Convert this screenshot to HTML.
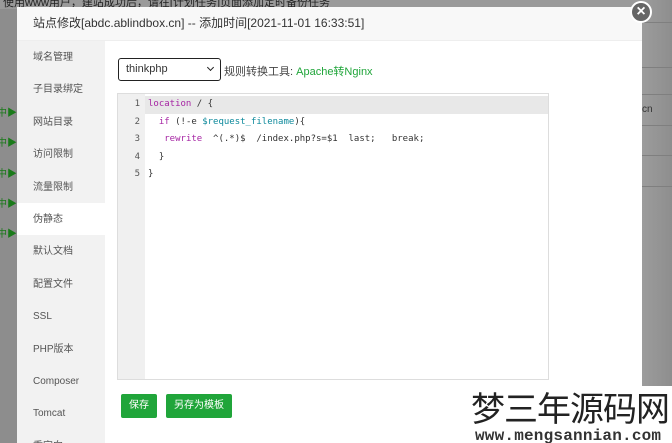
<!DOCTYPE html>
<html><head><meta charset="utf-8"><style>
*{margin:0;padding:0;box-sizing:border-box}
html,body{width:672px;height:443px;overflow:hidden}
body{background:#8f8f8f;font-family:"Liberation Sans","Noto Sans CJK SC",sans-serif;position:relative}
.top{position:absolute;left:0;top:0;width:672px;height:9px;background:#9a9a9a;font-size:11px;color:#222;line-height:6px;overflow:hidden;white-space:nowrap}
.left{position:absolute;left:0;top:9px;width:17px;height:434px;background:#8d8d8d;overflow:hidden}
.left div{position:absolute;left:-3px;font-size:10px;color:#1a7a1a;white-space:nowrap}
.right{position:absolute;left:642px;top:0;width:30px;height:443px;background:linear-gradient(90deg,#9c9c9c,#8e8e8e)}
.right i{position:absolute;left:0;width:30px;height:1px;background:#7f7f7f}
.dlg{position:absolute;left:17px;top:7px;width:625px;height:436px;background:#fff;overflow:hidden}
.hd{position:absolute;left:0;top:0;width:625px;height:34px;background:#f8f8f8;border-bottom:1px solid #eee;font-size:12px;color:#333;line-height:32px;padding-left:16px;z-index:2}
.side{position:absolute;left:0;top:34px;width:88px;height:410px;background:#f2f2f2}
.side div{height:32.4px;line-height:34px;font-size:10px;color:#555;padding-left:16px}
.side .on{background:#fff}
.close{position:absolute;left:630px;top:1px;width:22px;height:22px;border-radius:50%;background:#666;border:2px solid #fff;color:#fff;text-align:center;line-height:17px;font-size:16px;font-weight:bold;z-index:3}
.sel{position:absolute;left:118px;top:58px;width:103px;height:23px;border:1.5px solid #222;border-radius:3px;font-size:11px;line-height:20px;padding-left:7px;color:#333;background:#fff}
.sel:after{content:"";position:absolute;right:7px;top:6px;width:4px;height:4px;border-right:1.5px solid #222;border-bottom:1.5px solid #222;transform:rotate(45deg)}
.tool{position:absolute;left:224px;top:63px;font-size:11px;color:#444}
.tool span{color:#20a53a}
.ed{position:absolute;left:117px;top:93px;width:432px;height:287px;border:1px solid #ddd;background:#fff}
.gut{position:absolute;left:0;top:0;width:27px;height:100%;background:#f0f0f0}
.ln{position:absolute;left:0;width:27px;text-align:right;padding-right:5px;font:9px "DejaVu Sans Mono",monospace;color:#555}
.cl{position:absolute;left:30px;font:9px "DejaVu Sans Mono",monospace;color:#333;white-space:pre}
.act{position:absolute;left:0;top:2px;width:430px;height:18px;background:#e8e8e8}
.k{color:#a626a4}.v{color:#0e8a9c}
.btn{position:absolute;top:394px;height:24px;background:#20a53a;color:#fff;font-size:10px;line-height:24px;text-align:center;border-radius:2px}
.wm{position:absolute;left:472px;top:386px;width:200px;height:57px;background:#fff;overflow:hidden}
.wm .a{position:absolute;left:-1px;top:-1px;font-size:34px;line-height:44px;color:#222;white-space:nowrap;letter-spacing:-1px;font-family:"Noto Sans CJK SC",sans-serif}
.wm .b{position:absolute;left:3px;top:41px;font:bold 16px "Liberation Mono",monospace;color:#333;white-space:nowrap;letter-spacing:0.2px}
</style></head><body>
<div class="top">&nbsp;使用www用户，建站成功后，请在[计划任务]页面添加定时备份任务</div>
<div class="left">
<div style="top:95px">中▶</div><div style="top:125px">中▶</div><div style="top:156px">中▶</div><div style="top:186px">中▶</div><div style="top:216px">中▶</div>
</div>
<div class="right"><i style="top:22px"></i><i style="top:67px"></i><i style="top:94px"></i><i style="top:125px"></i><i style="top:155px"></i><i style="top:186px"></i><div style="position:absolute;left:0;top:104px;font-size:10px;color:#333">cn</div></div>
<div class="dlg">
<div class="hd">站点修改[abdc.ablindbox.cn] -- 添加时间[2021-11-01 16:33:51]</div>
<div class="side">
<div>域名管理</div><div>子目录绑定</div><div>网站目录</div><div>访问限制</div><div>流量限制</div><div class="on">伪静态</div><div>默认文档</div><div>配置文件</div><div>SSL</div><div>PHP版本</div><div>Composer</div><div>Tomcat</div><div>重定向</div>
</div>
</div>
<div class="close">×</div>
<div class="sel">thinkphp</div>
<div class="tool">规则转换工具: <span>Apache转Nginx</span></div>
<div class="ed">
<div class="act"></div>
<div class="gut"></div>
<div class="ln" style="top:5px">1</div><div class="ln" style="top:23px">2</div><div class="ln" style="top:40px">3</div><div class="ln" style="top:58px">4</div><div class="ln" style="top:75px">5</div>
<div class="cl" style="top:5px"><span class="k">location</span> / {</div>
<div class="cl" style="top:23px">  <span class="k">if</span> (!-e <span class="v">$request_filename</span>){</div>
<div class="cl" style="top:40px">   <span class="k">rewrite</span>  ^(.*)$  /index.php?s=$1  last;   break;</div>
<div class="cl" style="top:58px">  }</div>
<div class="cl" style="top:75px">}</div>
</div>
<div class="btn" style="left:121px;width:36px">保存</div>
<div class="btn" style="left:166px;width:66px">另存为模板</div>
<div class="wm"><div class="a">梦三年源码网</div><div class="b">www.mengsannian.com</div></div>
</body></html>
